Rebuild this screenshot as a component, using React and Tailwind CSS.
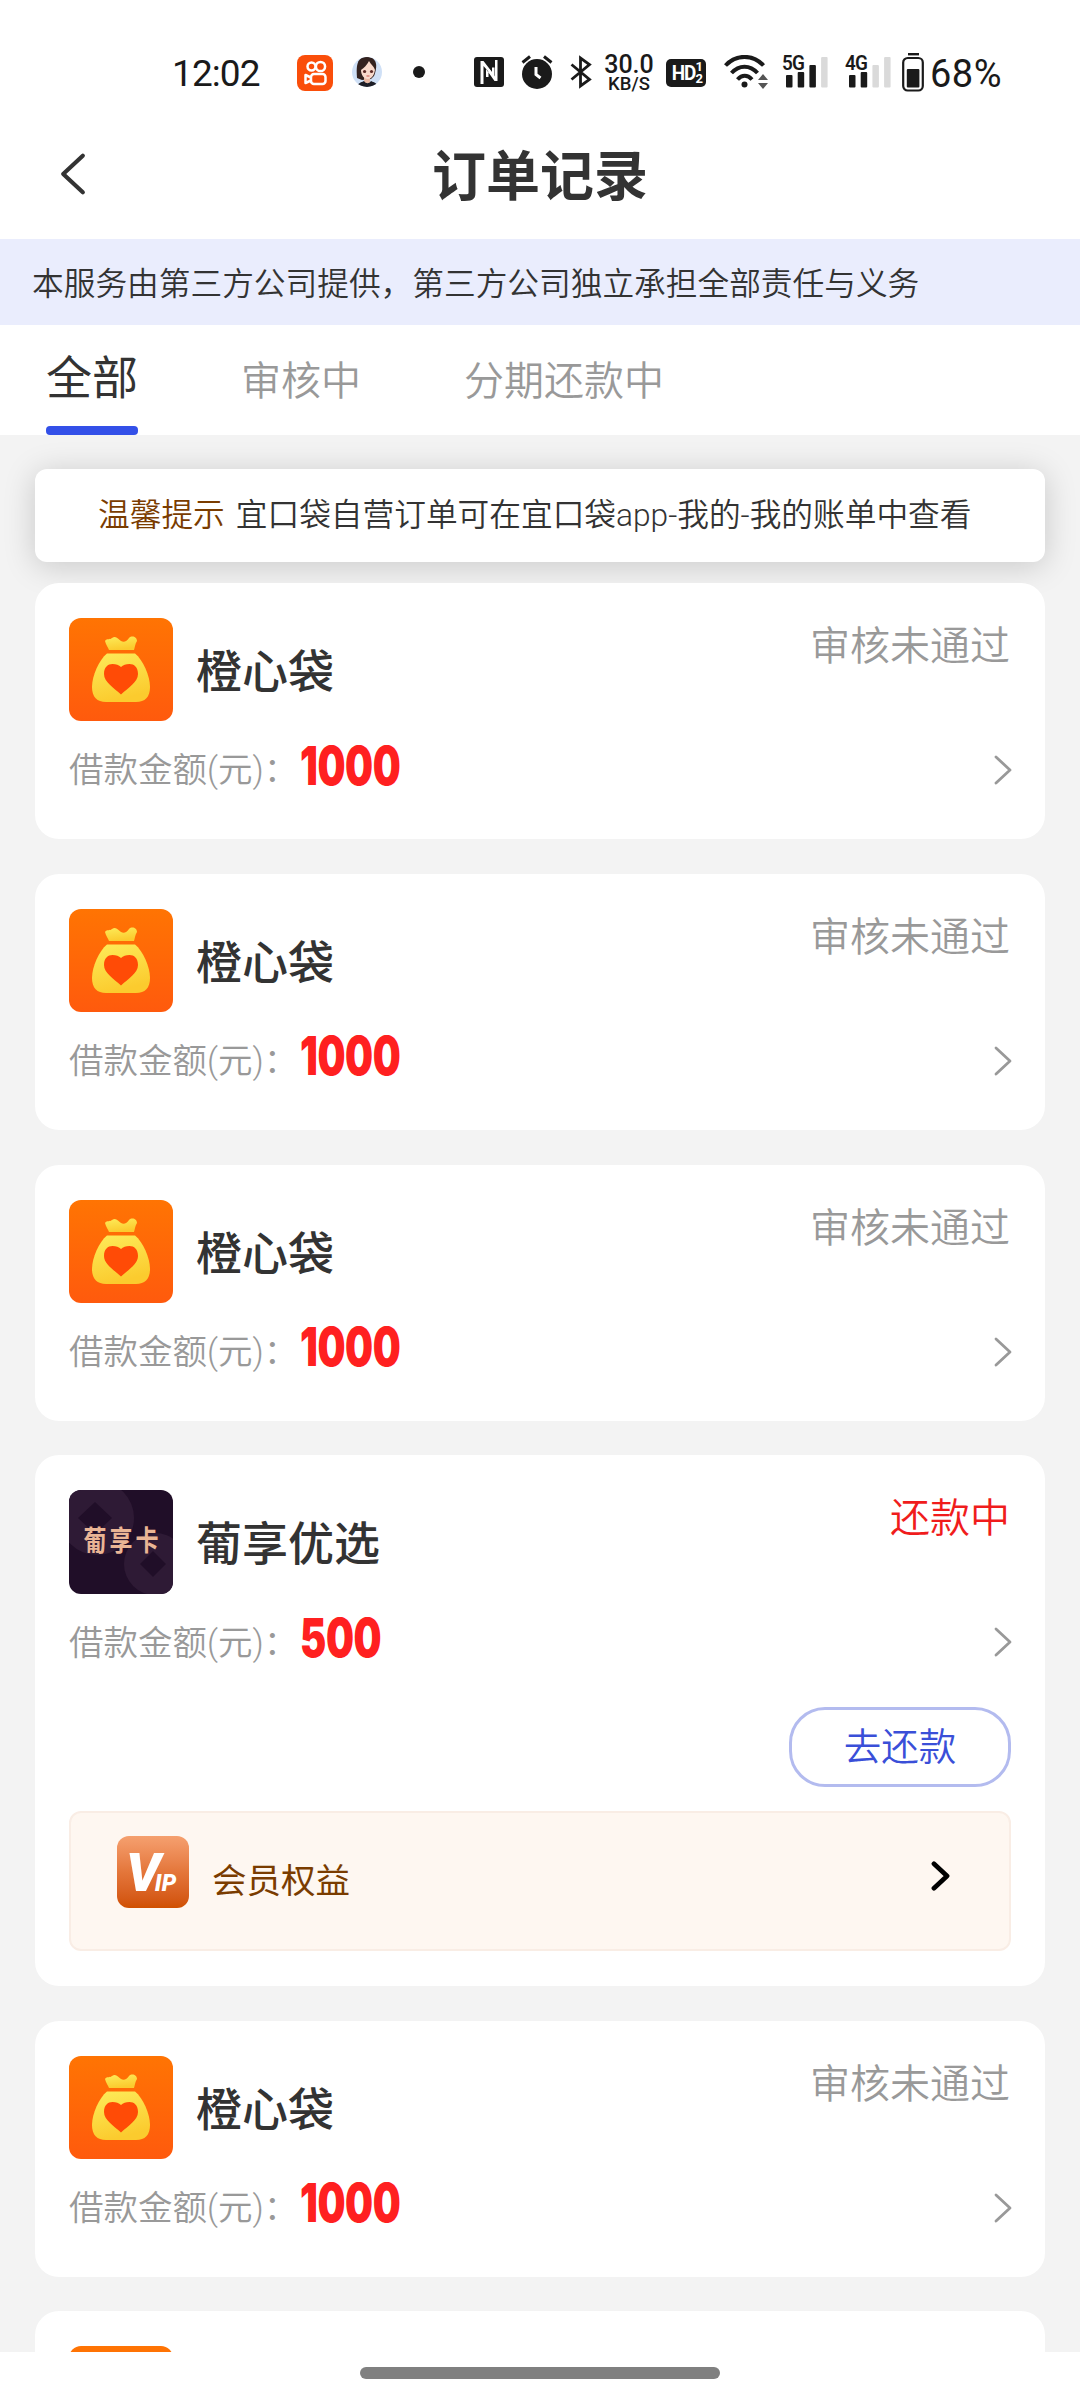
import { clsx } from "clsx";

const orders = [
    { id: 1, name: "橙心袋", icon: "bag", amount: 1000, status: "审核未通过" },
    { id: 2, name: "橙心袋", icon: "bag", amount: 1000, status: "审核未通过" },
    { id: 3, name: "橙心袋", icon: "bag", amount: 1000, status: "审核未通过" },
    { id: 4, name: "葡享优选", icon: "card", amount: 500, status: "还款中", active: true },
    { id: 5, name: "橙心袋", icon: "bag", amount: 1000, status: "审核未通过" },
    { id: 6, name: "橙心袋", icon: "bag", amount: 1000, status: "审核未通过" },
];

const tabs = ["全部", "审核中", "分期还款中"];

function Chevron({ className, width = 3 }) {
    return (
        <svg viewBox="0 0 20 32" className={className} fill="none" stroke="currentColor" strokeWidth={width} strokeLinecap="round" strokeLinejoin="round">
            <path d="M3 3 L17 16 L3 29" />
        </svg>
    );
}

function Signal({ label, level }) {
    const tops = [20, 17, 10, 2];
    return (
        <div className="relative h-[34px] w-[47px]">
            <span className="absolute -top-[1px] left-0 origin-left scale-x-90 text-[21px] leading-[18px] font-semibold tracking-[-1px]">{label}</span>
            <svg viewBox="0 0 47 34" className="h-[34px] w-[47px]">
                {tops.map((top, i) => (
                    <rect key={top} x={4 + i * 11.7} y={top} width="6.5" height={32.5 - top} rx="1" fill={i < level ? "#1a1a1a" : "#dadada"} />
                ))}
            </svg>
        </div>
    );
}

function StatusBar() {
    return (
        <div className="flex h-[106px] items-start pt-[55px] pl-[172px] text-[#1a1a1a]">
            <span className="w-[125px] pt-[1px] text-[37px] leading-[36px] tracking-[-0.9px]">12:02</span>

            {/* Video app */}
            <svg viewBox="0 0 36 36" className="h-[36px] w-[36px]">
                <rect width="36" height="36" rx="8" fill="#fa4e0a" />
                <g fill="none" stroke="#fff" strokeWidth="2.5">
                    <circle cx="14.5" cy="11.5" r="4" />
                    <circle cx="23.5" cy="11.5" r="4.6" />
                    <rect x="14" y="19" width="14.5" height="10" rx="3" />
                    <path d="M14 22.5 L8.5 20 V28 L14 25.5" strokeLinejoin="round" />
                </g>
            </svg>

            {/* Avatar */}
            <svg viewBox="0 0 30 30" className="mt-[2px] ml-[19px] h-[30px] w-[30px]">
                <clipPath id="avatar"><circle cx="15" cy="15" r="15" /></clipPath>
                <g clipPath="url(#avatar)">
                    <rect width="30" height="30" fill="#cfe0f6" />
                    <path d="M5 21 C4 8 5 0 15 0 C25 0 26 9 22 19 L19 22 L10 23 Z" fill="#33221f" />
                    <path d="M12 18 H18 V26 H12 Z" fill="#e9b9a4" />
                    <path d="M9 13 C12 11 15 8 17 4 C19 8 22 9 23 13 C22 19 19 22 16 22 C12 22 9 18 9 13 Z" fill="#f8d9cb" />
                    <path d="M5 30 C6 25 11 25 12 24 C14 27 17 27 19 24 C20 25 25 25 26 30 Z" fill="#1d1e26" />
                    <circle cx="12.6" cy="14.5" r="1.6" fill="#5b2a26" />
                    <circle cx="19.5" cy="14.5" r="1.6" fill="#5b2a26" />
                    <path d="M14.5 19 H17.5" stroke="#c9574f" strokeWidth="1" />
                </g>
            </svg>

            <span className="mt-[11px] ml-[31px] h-3 w-3 rounded-full bg-[#1a1a1a]" />

            {/* NFC */}
            <svg viewBox="0 0 30 30" className="mt-[2px] ml-[49px] h-[30px] w-[30px]">
                <rect width="30" height="30" rx="3" fill="#1a1a1a" />
                <path d="M6.5 27 V4 H9.5 L18 15 V10.5 H20.5 V21.5 L9.5 9 V27 Z" fill="#fff" />
                <path d="M12 12 L20.5 24 H23.5 V3 H21 V19.5 L14.5 11 V20 H12 Z" fill="#fff" />
            </svg>

            {/* Alarm */}
            <svg viewBox="0 0 32 34" className="ml-[17px] h-[34px] w-[32px]">
                <circle cx="16" cy="19" r="15" fill="#1a1a1a" />
                <path d="M1.5 7.5 L9 1.5 M30.5 7.5 L23 1.5" stroke="#1a1a1a" strokeWidth="3" />
                <path d="M15 12 V19.5 L19.5 23" fill="none" stroke="#fff" strokeWidth="3" />
            </svg>

            {/* Bluetooth */}
            <svg viewBox="0 0 22 34" className="ml-[17px] h-[34px] w-[22px]" fill="none" stroke="#1a1a1a" strokeWidth="2.8">
                <path d="M1.5 9.5 L19.5 24.5 L10.5 31 V3 L19.5 9.5 L1.5 24.5" />
            </svg>

            <div className="ml-[12px] flex w-[50px] flex-col items-center whitespace-nowrap">
                <span className="text-[25px] leading-[20px] font-medium">30.0</span>
                <span className="text-[18.5px] leading-[19px] font-medium">KB/S</span>
            </div>

            <div className="mt-[4px] ml-[12px] flex h-[28px] w-[40px] items-center justify-center rounded-[5px] bg-[#1a1a1a] text-white">
                <span className="origin-right scale-x-90 text-[21px] leading-none font-bold tracking-[-1px]">HD</span>
                <span className="flex flex-col text-[13px] leading-[12px] font-bold">
                    <span>1</span>
                    <span>2</span>
                </span>
            </div>

            {/* Wifi */}
            <svg viewBox="0 0 46 36" className="ml-[18px] h-[36px] w-[46px]">
                <g fill="none" stroke="#1a1a1a" strokeWidth="4">
                    <path d="M1.5 10.5 C12 -1 29 -1 39.5 10.5" />
                    <path d="M7.5 18 C15 9.5 26 9.5 33.5 18" />
                    <path d="M13.5 24.5 C18 19.5 23.5 19.5 28 24.5" />
                </g>
                <circle cx="20.5" cy="29.5" r="3" fill="#1a1a1a" />
                <path d="M34 25 L39 19 L44 25 Z M34 28 L39 34 L44 28 Z" fill="#555" />
            </svg>

            <div className="ml-[12px]"><Signal label="5G" level={3} /></div>
            <div className="ml-[16px]"><Signal label="4G" level={2} /></div>

            {/* Battery */}
            <svg viewBox="0 0 22 40" className="-mt-[2px] ml-[10px] h-[40px] w-[22px]">
                <rect x="6" y="0" width="11" height="2.4" fill="#1a1a1a" />
                <rect x="1.2" y="5" width="19.6" height="32.5" rx="4.5" fill="none" stroke="#1a1a1a" strokeWidth="2.2" />
                <rect x="4.8" y="16" width="12.6" height="18.5" rx="1" fill="#1a1a1a" />
            </svg>
            <span className="ml-[6px] pt-[1px] text-[38px] leading-[36px] tracking-[0.5px]">68%</span>
        </div>
    );
}

function BagIcon() {
    return (
        <svg viewBox="0 0 104 104" className="h-[104px] w-[104px]">
            <defs>
                <linearGradient id="orange" x1="0" y1="0" x2="0" y2="1">
                    <stop offset="0" stopColor="#ff7403" />
                    <stop offset="1" stopColor="#ff5a0d" />
                </linearGradient>
                <linearGradient id="gold" x1="0" y1="0" x2="0.3" y2="1">
                    <stop offset="0" stopColor="#fdec5a" />
                    <stop offset="1" stopColor="#fbcb2e" />
                </linearGradient>
            </defs>
            <rect width="104" height="103" rx="12" fill="url(#orange)" />
            <path d="M40 32 C39 29 37 27 36 23 C38 20 41 22 43 20 C47 17 49 21 52 23 C55 25 58 23 60 20 C63 17 68 19 68 23 C66 26 66 29 65 32 Z" fill="url(#gold)" />
            <path d="M38 35.5 H66 C74 42 81 58 81 69 C81 79 76 84 67 84 H37 C28 84 23 79 23 69 C23 58 30 42 38 35.5 Z" fill="url(#gold)" />
            <path d="M52 76.5 C45 70 35 64 35 56 C35 49 39 46 43.5 46 C47 46 50 47 52 49 C54 47 57 46 60.5 46 C65 46 69 49 69 56 C69 64 59 70 52 76.5 Z" fill="#ff4b06" />
        </svg>
    );
}

function CardIcon() {
    return (
        <div className="relative h-[104px] w-[104px] overflow-hidden rounded-xl bg-[#200e28]">
            <svg viewBox="0 0 104 104" className="h-[104px] w-[104px]">
                <circle cx="28" cy="28" r="37" fill="#2e1a35" />
                <path d="M26 12 L43 28 L26 44 L9 28 Z" fill="#200e28" />
                <circle cx="86" cy="74" r="31" fill="#2e1a35" />
                <path d="M84 61 L97 74 L84 87 L71 74 Z" fill="#200e28" />
            </svg>
            <span className="absolute inset-0 flex scale-y-[1.25] items-center justify-center pt-[1px] pl-[3px] text-[23px] font-bold tracking-[3px] text-[#eab595]">葡享卡</span>
        </div>
    );
}

function VipIcon() {
    return (
        <div className="flex h-[72px] w-[72px] items-baseline rounded-xl bg-linear-to-b from-[#f5a06f] via-[#e4763a] to-[#d05000] pl-[9px] leading-[74px] font-black text-white italic">
            <span className="text-[54px] tracking-[-6px]">V</span>
            <span className="text-[23px] tracking-[0.5px]">IP</span>
        </div>
    );
}

function OrderCard({ order }) {
    return (
        <div className={clsx("shrink-0 rounded-[24px] bg-white px-[34px] pt-[35px]", order.active ? "h-[530.5px]" : "h-[256px]")}>
            <div className="flex items-start">
                {order.icon === "bag" ? <BagIcon /> : <CardIcon />}
                <h2 className="ml-[23px] pt-[22px] text-[46px] leading-[64px] font-medium text-[#333]">{order.name}</h2>
                <span className={clsx("mr-[1px] ml-auto pt-[1px] text-[40px] leading-[56px] font-[350]", order.active ? "text-[#f01c1c]" : "text-[#999]")}>{order.status}</span>
            </div>

            <div className="mt-[20px] flex h-[56px] items-center">
                <span className="w-[232px] pt-[2px] text-[34.5px] font-[350] whitespace-nowrap text-[#999]">借款金额(元)：</span>
                <span className="-mt-[9px] -ml-[1px] origin-left scale-x-[0.73] font-[Inter] text-[54px] leading-none font-black tracking-[-0.5px] text-[#ff2020]">{order.amount}</span>
                <Chevron className="-mr-[2px] ml-auto h-[32px] w-[20px] text-[#999]" width={2.8} />
            </div>

            {order.active && (
                <>
                    <div className="mt-[37px] flex justify-end">
                        <button className="h-[80px] w-[222px] rounded-[36px] border-[3px] border-[#b3bbef] pt-[1px] text-[37.5px] leading-none font-[350] text-[#3a4fd8]">去还款</button>
                    </div>
                    <div className="mt-[24px] flex h-[140px] items-start rounded-xl border-2 border-[#f9ede5] bg-[#fef7f1] pt-[23px] pl-[46px]">
                        <VipIcon />
                        <span className="mt-[21px] ml-[23px] text-[34.5px] leading-[48px] text-[#7a3c00]">会员权益</span>
                        <Chevron className="mt-[25px] mr-[59px] ml-auto h-[30px] w-[19px] text-black" width={5} />
                    </div>
                </>
            )}
        </div>
    );
}

export default function App() {
    return (
        <div className="flex h-[2400px] w-[1080px] flex-col overflow-hidden bg-white font-[Roboto,'Noto_Sans_CJK_SC',sans-serif]">
            <StatusBar />

            <header className="flex h-[133px] shrink-0 items-center pl-[59px]">
                <Chevron className="mt-[2px] h-[46px] w-[28px] rotate-180 text-[#333]" width={3} />
                <h1 className="mr-[87px] flex-1 pt-[10px] text-center text-[54px] leading-none font-bold text-[#333]">订单记录</h1>
            </header>

            <p className="h-[86px] shrink-0 bg-[#eaedfd] pt-[3px] pl-[32px] text-[31.7px] leading-[86px] font-[350] text-[#333]">
                本服务由第三方公司提供，第三方公司独立承担全部责任与义务
            </p>

            <nav className="flex h-[110px] shrink-0 gap-[103px] pl-[46px]">
                {tabs.map((tab, i) => (
                    <div key={tab} className={clsx("relative", i === 0 ? "text-[46px] leading-[107px] text-[#333]" : "text-[40px] leading-[113px] font-[350] text-[#999]")}>
                        {tab}
                        {i === 0 && <span className="absolute bottom-0 left-0 h-[9px] w-full rounded-[4px] bg-[#3350e8]" />}
                    </div>
                ))}
            </nav>

            <main className="flex h-[1917px] shrink-0 flex-col overflow-hidden bg-[#f3f3f3] px-[35px] pt-[34px]">
                <div className="flex h-[93px] shrink-0 items-center rounded-xl bg-white pl-[63px] text-[31.7px] font-[350] whitespace-nowrap text-[#333] shadow-[0_4px_32px_rgba(0,0,0,0.18)]">
                    <span className="mr-[11px] text-[#7a3c00]">温馨提示</span>
                    宜口袋自营订单可在宜口袋app-我的-我的账单中查看
                </div>
                <div className="relative mt-[21px] flex flex-col gap-[34.8px]">
                    {orders.map((order) => (
                        <OrderCard key={order.id} order={order} />
                    ))}
                </div>
            </main>

            <footer className="flex h-[48px] shrink-0 justify-center bg-white pt-[15px]">
                <div className="h-[12px] w-[360px] rounded-full bg-[#808080]" />
            </footer>
        </div>
    );
}
